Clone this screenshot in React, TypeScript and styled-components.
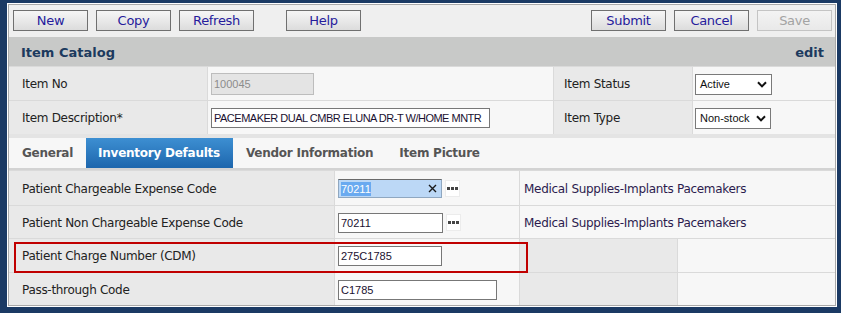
import React from "react";
import styled, { createGlobalStyle } from "styled-components";

const Global = createGlobalStyle`
  html, body { margin: 0; padding: 0; background: #1b3a64; }
  body { font-family: "DejaVu Sans", Verdana, sans-serif; }
  * { box-sizing: border-box; }
`;

const Frame = styled.div`
  width: 841px;
  height: 313px;
  padding: 3px 4px 6px 7px;
  background: #1b3a64;
`;

const Panel = styled.div`
  height: 100%;
  border: 1px solid #ffffff;
`;

const Inner = styled.div`
  height: 100%;
  border: 1px solid #a9a9a9;
  background: #f7f7f7;
  display: flex;
  flex-direction: column;
`;

const Toolbar = styled.div`
  height: 32px;
  flex: none;
  display: flex;
  align-items: flex-start;
  gap: 8px;
  padding: 5px 3px 0 4px;
  background: #efefef;
`;

const Button = styled.button<{ $push?: "help" | "right"; disabled?: boolean }>`
  width: 75px;
  height: 21px;
  padding: 0;
  border: 1px solid ${(p) => (p.disabled ? "#c4c4c4" : "#707070")};
  background: ${(p) =>
    p.disabled ? "linear-gradient(#f3f3f3, #e9e9e9)" : "linear-gradient(#f6f6f6, #dcdcdc)"};
  color: ${(p) => (p.disabled ? "#a3a3a3" : "#261b9c")};
  font-family: "DejaVu Sans", Verdana, sans-serif;
  font-size: 13px;
  letter-spacing: -0.3px;
  line-height: 19px;
  margin-left: ${(p) => (p.$push === "help" ? "24px" : p.$push === "right" ? "auto" : "0")};
`;

const TitleBar = styled.div`
  height: 29px;
  flex: none;
  display: flex;
  align-items: center;
  justify-content: space-between;
  padding: 1px 11px 0 12px;
  background: #c8c9c8;
  color: #1c3a5e;
  font-weight: bold;
  font-size: 13px;
  letter-spacing: 0;
`;

const TopGrid = styled.div`
  flex: none;
  display: grid;
  grid-template-columns: 198px 345px 138px 1fr;
  grid-template-rows: 33px 33px;
  gap: 1px;
  padding-top: 1px;
  background: #dadada;
`;

const BottomWrap = styled.div`
  position: relative;
  flex: 1;
`;

const BottomGrid = styled.div`
  display: grid;
  grid-template-columns: 325px 184px 157px 1fr;
  grid-template-rows: 34px 32px 33px 32px;
  gap: 1px;
  padding-top: 1px;
  background: #dadada;
  height: 100%;
`;

const Cell = styled.div<{ $tone: "label" | "value"; $span?: number }>`
  display: flex;
  align-items: center;
  gap: 3px;
  padding-left: ${(p) => (p.$tone === "label" ? "13px" : "3px")};
  padding-top: 1px;
  background: ${(p) => (p.$tone === "label" ? "#e9e9e9" : "#f7f7f7")};
  grid-column: ${(p) => (p.$span ? `span ${p.$span}` : "auto")};
  color: #222222;
  font-size: 12px;
  letter-spacing: -0.3px;
  white-space: nowrap;
`;

const Desc = styled.span`
  padding-left: 1px;
  color: #2c1b4e;
`;

const TextInput = styled.input<{ $w: number; $tight?: boolean }>`
  width: ${(p) => p.$w}px;
  height: 20px;
  padding: 0 2px;
  border: 1px solid #777777;
  background: #ffffff;
  color: #1a1030;
  font-family: "Liberation Sans", Arial, sans-serif;
  font-size: 11px;
  letter-spacing: ${(p) => (p.$tight ? "-0.5px" : "0")};
  outline: none;
  &:disabled {
    background: #e4e4e4;
    border-color: #bdbdbd;
    color: #8c8c8c;
    height: 22px;
  }
`;

const FocusField = styled.div`
  width: 104px;
  height: 19px;
  display: flex;
  align-items: center;
  justify-content: space-between;
  padding: 0 4px 0 2px;
  border: 1px solid #8fa7c0;
  border-top-color: #6a6a6a;
  background: #bcd8f6;
  font-family: "Liberation Sans", Arial, sans-serif;
  font-size: 11px;
  letter-spacing: 0;
`;

const Selected = styled.span`
  background: #6aaaf0;
  color: #ffffff;
  padding: 1px 0;
`;

const Lookup = styled.span`
  width: 15px;
  height: 17px;
  display: inline-flex;
  align-items: center;
  justify-content: center;
  gap: 1px;
  background: #ffffff;
  border: 1px solid #ececec;
`;

const Dot = styled.span`
  width: 3px;
  height: 3px;
  background: #444444;
`;

const SelectBox = styled.div<{ $w: number }>`
  width: ${(p) => p.$w}px;
  height: 21px;
  display: flex;
  align-items: center;
  justify-content: space-between;
  padding: 0 4px 0 4px;
  border: 1px solid #7a7a7a;
  background: #ffffff;
  color: #111111;
  font-family: "Liberation Sans", Arial, sans-serif;
  font-size: 11px;
  letter-spacing: 0;
`;

const TabBar = styled.div`
  flex: none;
  display: flex;
  height: 36px;
  border-top: 4px solid #e4e4e4;
  border-bottom: 2px solid #d3d3d3;
  background: #f7f7f7;
`;

const Tab = styled.div<{ $active?: boolean }>`
  display: flex;
  align-items: center;
  padding: 0 13px 0 ${(p) => (p.$active ? "12px" : "13px")};
  font-weight: bold;
  font-size: 12px;
  letter-spacing: -0.25px;
  color: ${(p) => (p.$active ? "#ffffff" : "#555555")};
  background: ${(p) => (p.$active ? "linear-gradient(#3d8fd2, #1d66ad)" : "transparent")};
`;

const Highlight = styled.div`
  position: absolute;
  left: 5px;
  top: 72px;
  width: 514px;
  height: 31px;
  border: 2px solid #c00000;
  pointer-events: none;
`;

const Chevron = () => (
  <svg width="10" height="7" viewBox="0 0 10 7">
    <polyline points="1,1.2 5,5.4 9,1.2" fill="none" stroke="#111" strokeWidth="2" />
  </svg>
);

const Cross = () => (
  <svg width="9" height="9" viewBox="0 0 9 9">
    <path d="M1 1 L8 8 M8 1 L1 8" stroke="#1a1a1a" strokeWidth="1.4" />
  </svg>
);

const Ellipsis = () => (
  <Lookup>
    <Dot />
    <Dot />
    <Dot />
  </Lookup>
);

export default function App() {
  return (
    <>
      <Global />
      <Frame>
        <Panel>
          <Inner>
            <Toolbar>
              <Button>New</Button>
              <Button>Copy</Button>
              <Button>Refresh</Button>
              <Button $push="help">Help</Button>
              <Button $push="right">Submit</Button>
              <Button>Cancel</Button>
              <Button disabled>Save</Button>
            </Toolbar>
            <TitleBar>
              <span>Item Catalog</span>
              <span>edit</span>
            </TitleBar>
            <TopGrid>
              <Cell $tone="label">Item No</Cell>
              <Cell $tone="value">
                <TextInput $w={103} disabled defaultValue="100045" />
              </Cell>
              <Cell $tone="label" style={{ paddingLeft: 10 }}>Item Status</Cell>
              <Cell $tone="value" style={{ paddingLeft: 2 }}>
                <SelectBox $w={77}>
                  <span>Active</span>
                  <Chevron />
                </SelectBox>
              </Cell>
              <Cell $tone="label">Item Description*</Cell>
              <Cell $tone="value">
                <TextInput $w={279} $tight readOnly value="PACEMAKER DUAL CMBR ELUNA DR-T W/HOME MNTR" />
              </Cell>
              <Cell $tone="label" style={{ paddingLeft: 10 }}>Item Type</Cell>
              <Cell $tone="value" style={{ paddingLeft: 2 }}>
                <SelectBox $w={76}>
                  <span>Non-stock</span>
                  <Chevron />
                </SelectBox>
              </Cell>
            </TopGrid>
            <TabBar>
              <Tab>General</Tab>
              <Tab $active>Inventory Defaults</Tab>
              <Tab>Vendor Information</Tab>
              <Tab>Item Picture</Tab>
            </TabBar>
            <BottomWrap>
              <BottomGrid>
                <Cell $tone="label">Patient Chargeable Expense Code</Cell>
                <Cell $tone="value">
                  <FocusField>
                    <Selected>70211</Selected>
                    <Cross />
                  </FocusField>
                  <Ellipsis />
                </Cell>
                <Cell $tone="value" $span={2}>
                  <Desc>Medical Supplies-Implants Pacemakers</Desc>
                </Cell>
                <Cell $tone="label">Patient Non Chargeable Expense Code</Cell>
                <Cell $tone="value">
                  <TextInput $w={105} readOnly value="70211" />
                  <Ellipsis />
                </Cell>
                <Cell $tone="value" $span={2}>
                  <Desc>Medical Supplies-Implants Pacemakers</Desc>
                </Cell>
                <Cell $tone="label">Patient Charge Number (CDM)</Cell>
                <Cell $tone="value">
                  <TextInput $w={104} readOnly value="275C1785" />
                </Cell>
                <Cell $tone="label" />
                <Cell $tone="value" />
                <Cell $tone="label">Pass-through Code</Cell>
                <Cell $tone="value">
                  <TextInput $w={159} readOnly value="C1785" />
                </Cell>
                <Cell $tone="label" />
                <Cell $tone="value" />
              </BottomGrid>
              <Highlight />
            </BottomWrap>
          </Inner>
        </Panel>
      </Frame>
    </>
  );
}
